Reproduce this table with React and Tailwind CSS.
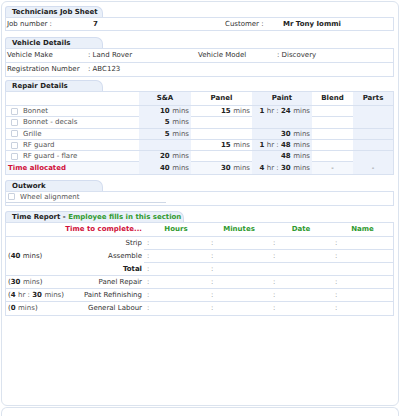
const line = 'border-[#d8e1f0]';

function Tab({ children, wide }) {
    return (
        <div
            className={`${wide ? 'w-[179px]' : 'w-[98px]'} h-[11px] whitespace-nowrap rounded-tl-[3px] rounded-tr-[7px] border border-b-0 border-[#d3ddef] bg-[#eaf0f9] pl-[6px] text-[7px] font-bold leading-[10px] text-[#222]`}
        >
            {children}
        </div>
    );
}

function Check() {
    return <span className="inline-block h-[7px] w-[7px] rounded-[1px] border border-[#c9d1de] bg-white" />;
}

function Mins({ value }) {
    if (!value) return null;
    const parts = value.split(' ');
    return (
        <span>
            {parts.map((p, i) => (
                <span key={i} className={/\d/.test(p) ? 'font-bold text-[#222]' : 'text-[#555]'}>
                    {p}
                    {i < parts.length - 1 ? ' ' : ''}
                </span>
            ))}
        </span>
    );
}

const repairs = [
    { name: 'Bonnet', sa: '10 mins', panel: '15 mins', paint: '1 hr : 24 mins' },
    { name: 'Bonnet - decals', sa: '5 mins' },
    { name: 'Grille', sa: '5 mins', paint: '30 mins' },
    { name: 'RF guard', panel: '15 mins', paint: '1 hr : 48 mins' },
    { name: 'RF guard - flare', sa: '20 mins', paint: '48 mins' },
];

const repairCols = 'grid grid-cols-[133px_52px_61px_60px_41px_1fr]';

function Colon() {
    return <span className="pl-[3px] text-[#888]">:</span>;
}

export default function App() {
    return (
        <div className="h-[416px] w-[400px] overflow-hidden bg-white font-['DejaVu_Sans',Verdana,sans-serif] text-[7px] text-[#333]">
            <div className="ml-[1px] mt-[1px] h-[405px] w-[398px] rounded-[6px] border border-[#dbe3ee] pl-[3px] pr-[4px] pt-[4px]">
                {/* Technicians job sheet */}
                <Tab>Technicians Job Sheet</Tab>
                <div className={`grid h-[14px] grid-cols-[86px_132px_58px_1fr] items-center border ${line} pl-[1px]`}>
                    <span>Job number :</span>
                    <span className="font-bold text-[#222]">7</span>
                    <span>Customer :</span>
                    <span className="font-bold text-[#222]">Mr Tony Iommi</span>
                </div>

                {/* Vehicle */}
                <div className="mt-[6px]">
                    <Tab>Vehicle Details</Tab>
                    <div className={`border ${line}`}>
                        <div className={`grid h-[14px] grid-cols-[81px_110px_79px_1fr] items-center border-b ${line} pl-[1px]`}>
                            <span>Vehicle Make</span>
                            <span>: Land Rover</span>
                            <span>Vehicle Model</span>
                            <span>: Discovery</span>
                        </div>
                        <div className="grid h-[13px] grid-cols-[81px_1fr] items-center pl-[1px]">
                            <span>Registration Number</span>
                            <span>: ABC123</span>
                        </div>
                    </div>
                </div>

                {/* Repair details */}
                <div className="mt-[3px]">
                    <Tab>Repair Details</Tab>
                    <div className={`border ${line}`}>
                        <div className={`${repairCols} h-[14px] items-stretch border-b ${line} font-bold text-[#222]`}>
                            <span />
                            <span className="flex items-center justify-center bg-[#edf2fb]">S&amp;A</span>
                            <span className="flex items-center justify-center">Panel</span>
                            <span className="flex items-center justify-center bg-[#edf2fb]">Paint</span>
                            <span className="flex items-center justify-center">Blend</span>
                            <span className="flex items-center justify-center bg-[#edf2fb]">Parts</span>
                        </div>
                        {repairs.map((r) => (
                            <div key={r.name} className={`${repairCols} h-[11.3px] border-b ${line}`}>
                                <span className="flex items-center gap-[5px] pl-[5px] text-[#555]">
                                    <Check />
                                    {r.name}
                                </span>
                                <span className="flex items-center justify-end bg-[#edf2fb] pr-[2px]">
                                    <Mins value={r.sa} />
                                </span>
                                <span className="flex items-center justify-end pr-[2px]">
                                    <Mins value={r.panel} />
                                </span>
                                <span className="flex items-center justify-end bg-[#edf2fb] pr-[2px]">
                                    <Mins value={r.paint} />
                                </span>
                                <span />
                                <span className="bg-[#edf2fb]" />
                            </div>
                        ))}
                        <div className={`${repairCols} h-[11.3px] bg-[#f5f8fd]`}>
                            <span className="flex items-center pl-[2px] font-bold text-[#d0103a]">Time allocated</span>
                            <span className="flex items-center justify-end bg-[#edf2fb] pr-[2px]">
                                <Mins value="40 mins" />
                            </span>
                            <span className="flex items-center justify-end pr-[2px]">
                                <Mins value="30 mins" />
                            </span>
                            <span className="flex items-center justify-end bg-[#edf2fb] pr-[2px]">
                                <Mins value="4 hr : 30 mins" />
                            </span>
                            <span className="flex items-center justify-center text-[#666]">-</span>
                            <span className="flex items-center justify-center bg-[#edf2fb] text-[#666]">-</span>
                        </div>
                    </div>
                </div>

                {/* Outwork */}
                <div className="mt-[5px]">
                    <Tab>Outwork</Tab>
                    <div className={`h-[15px] border ${line}`}>
                        <div className="flex h-[11px] w-[160px] items-center gap-[5px] border-b border-[#cfd8e6] pl-[2px] text-[#555]">
                            <Check />
                            Wheel alignment
                        </div>
                    </div>
                </div>

                {/* Time report */}
                <div className="mt-[5px]">
                    <Tab wide>
                        Time Report - <span className="text-[#2f9a2f]">Employee fills in this section</span>
                    </Tab>
                    <div className={`grid grid-cols-[70px_68px_64px_62px_62px_1fr] grid-rows-[14px] auto-rows-[13px] border ${line} whitespace-nowrap`}>
                        <span className={`border-b ${line}`} />
                        <span className={`flex items-center justify-end overflow-visible border-b ${line} pr-[2px] font-bold text-[#d0103a]`}>
                            Time to complete...
                        </span>
                        {['Hours', 'Minutes', 'Date', 'Name'].map((h) => (
                            <span key={h} className={`flex items-center justify-center border-b ${line} font-bold text-[#2f9a2f]`}>
                                {h}
                            </span>
                        ))}

                        <span className={`row-span-3 flex items-center border-b ${line} pl-[2px]`}>
                            (<b className="text-[#222]">40</b>&nbsp;mins)
                        </span>
                        <span className="flex items-center justify-end pr-[2px]">Strip</span>
                        <span className={`flex items-center border-b ${line}`}><Colon /></span>
                        <span className={`flex items-center border-b ${line}`}><Colon /></span>
                        <span className={`flex items-center border-b ${line}`}><Colon /></span>
                        <span className={`flex items-center border-b ${line}`}><Colon /></span>

                        <span className="flex items-center justify-end pr-[2px]">Assemble</span>
                        <span className={`flex items-center border-b ${line}`}><Colon /></span>
                        <span className={`flex items-center border-b ${line}`}><Colon /></span>
                        <span className={`flex items-center border-b ${line}`}><Colon /></span>
                        <span className={`flex items-center border-b ${line}`}><Colon /></span>

                        <span className={`flex items-center justify-end border-b ${line} pr-[2px] font-bold text-[#222]`}>Total</span>
                        <span className={`flex items-center border-b ${line}`}><Colon /></span>
                        <span className={`flex items-center border-b ${line}`}><Colon /></span>
                        <span className={`border-b ${line}`} />
                        <span className={`border-b ${line}`} />

                        {[
                            ['30 mins', 'Panel Repair'],
                            ['4 hr : 30 mins', 'Paint Refinishing'],
                            ['0 mins', 'General Labour'],
                        ].map(([t, label], i) => (
                            <div key={label} className="contents">
                                <span className={`flex items-center ${i < 2 ? 'border-b' : ''} ${line} pl-[2px]`}>
                                    (<Mins value={t} />)
                                </span>
                                <span className={`flex items-center justify-end ${i < 2 ? 'border-b' : ''} ${line} pr-[2px]`}>{label}</span>
                                <span className={`flex items-center ${i < 2 ? 'border-b' : ''} ${line}`}><Colon /></span>
                                <span className={`flex items-center ${i < 2 ? 'border-b' : ''} ${line}`}><Colon /></span>
                                <span className={`flex items-center ${i < 2 ? 'border-b' : ''} ${line}`}><Colon /></span>
                                <span className={`flex items-center ${i < 2 ? 'border-b' : ''} ${line}`}><Colon /></span>
                            </div>
                        ))}
                    </div>
                </div>
            </div>
            <div className="ml-[1px] mt-[1px] h-[20px] w-[398px] rounded-t-[6px] border border-b-0 border-[#dbe3ee]" />
        </div>
    );
}
